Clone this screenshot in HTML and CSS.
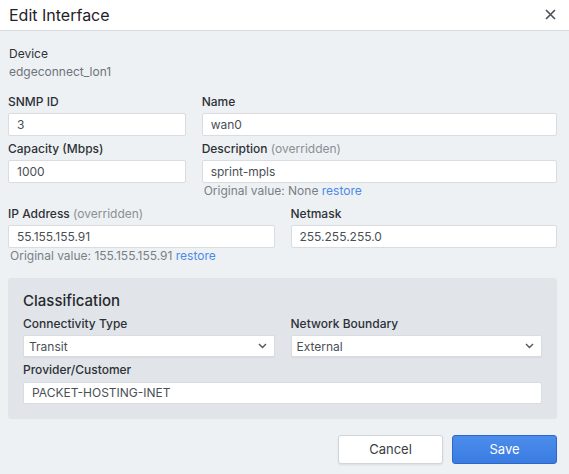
FILE: index.html
```html
<!DOCTYPE html>
<html lang="en">
<head>
    <meta charset="UTF-8">
    <title>Edit Interface</title>
    <link rel="stylesheet" href="styles.css">
</head>
<body>
    <div class="modal">
        <div class="header">
            <h2>Edit Interface</h2>
            <button class="close" aria-label="Close">
                <svg width="11" height="11" viewBox="0 0 11 11"><path d="M1 1L10 10M10 1L1 10" stroke="#4a4f55" stroke-width="1.6" fill="none"/></svg>
            </button>
        </div>

        <div class="content">
            <div class="device">
                <div class="label">Device</div>
                <div class="value">edgeconnect_lon1</div>
            </div>

            <div class="row thirds">
                <div class="field">
                    <label>SNMP ID</label>
                    <input type="text" value="3">
                </div>
                <div class="field">
                    <label>Name</label>
                    <input type="text" value="wan0">
                </div>
            </div>

            <div class="row thirds">
                <div class="field">
                    <label>Capacity (Mbps)</label>
                    <input type="text" value="1000">
                </div>
                <div class="field">
                    <label>Description <span class="muted">(overridden)</span></label>
                    <input type="text" value="sprint-mpls">
                    <div class="hint">Original value: None <a href="#">restore</a></div>
                </div>
            </div>

            <div class="row halves">
                <div class="field">
                    <label>IP Address <span class="muted">(overridden)</span></label>
                    <input type="text" value="55.155.155.91">
                    <div class="hint">Original value: 155.155.155.91 <a href="#">restore</a></div>
                </div>
                <div class="field">
                    <label>Netmask</label>
                    <input type="text" value="255.255.255.0">
                </div>
            </div>

            <div class="panel">
                <h3>Classification</h3>
                <div class="row halves">
                    <div class="field">
                        <label>Connectivity Type</label>
                        <div class="select">
                            <span>Transit</span>
                            <svg width="9" height="6" viewBox="0 0 9 6"><path d="M1 1L4.5 4.5L8 1" stroke="#555" stroke-width="1.4" fill="none"/></svg>
                        </div>
                    </div>
                    <div class="field">
                        <label>Network Boundary</label>
                        <div class="select">
                            <span>External</span>
                            <svg width="9" height="6" viewBox="0 0 9 6"><path d="M1 1L4.5 4.5L8 1" stroke="#555" stroke-width="1.4" fill="none"/></svg>
                        </div>
                    </div>
                </div>
                <div class="field">
                    <label>Provider/Customer</label>
                    <input type="text" value="PACKET-HOSTING-INET">
                </div>
            </div>

            <div class="actions">
                <button class="btn cancel">Cancel</button>
                <button class="btn save">Save</button>
            </div>
        </div>
    </div>
</body>
</html>
```

FILE: styles.css
```css
* {
    margin: 0;
    padding: 0;
    box-sizing: border-box;
}

html, body {
    width: 100%;
    height: 100%;
    font-family: Inter, "Noto Sans", Arial, sans-serif;
    background: #edf1f4;
    color: #2d3136;
}

.modal {
    width: 569px;
    min-height: 474px;
    background: #edf1f4;
}

.header {
    height: 31px;
    background: #ffffff;
    border-bottom: 1px solid #d6dbe0;
    display: flex;
    align-items: center;
    justify-content: space-between;
    padding: 0 13px 1px 9px;
}

.header h2 {
    font-size: 16px;
    font-weight: 400;
    color: #1f2226;
}

.close {
    border: none;
    background: none;
    display: flex;
    align-items: center;
}

.content {
    padding: 15px 12px 0 8px;
}

.device {
    padding-left: 1px;
    margin-bottom: 12px;
}

.label {
    font-size: 12px;
    line-height: 16px;
    color: #2d3136;
}

.device .value {
    font-size: 12px;
    line-height: 20px;
    color: #6e7378;
}

.row {
    display: grid;
    column-gap: 16px;
    margin-bottom: 5px;
}

.row.thirds {
    grid-template-columns: 1fr 2fr;
}

.row.halves {
    grid-template-columns: 1fr 1fr;
}

.field label {
    display: block;
    font-size: 12px;
    font-weight: 500;
    line-height: 16px;
    margin-bottom: 3px;
    color: #2d3136;
}

.muted {
    font-weight: 400;
    color: #8a8f95;
}

.field input,
.select {
    width: 100%;
    height: 23px;
    padding: 0 8px;
    border: 1px solid #d9dde2;
    border-radius: 2px;
    background: #ffffff;
    font-family: inherit;
    font-size: 12px;
    color: #4a4f55;
    outline: none;
}

.hint {
    font-size: 12px;
    line-height: 16px;
    color: #7a7f85;
    padding-left: 2px;
    margin-bottom: 2px;
}

.hint a {
    color: #4a8ae8;
    text-decoration: none;
}

.panel {
    margin-top: 12px;
    background: #e1e5ea;
    border-radius: 3px;
    padding: 13px 15px 15px;
}

.panel h3 {
    font-size: 15px;
    font-weight: 500;
    line-height: 20px;
    margin-bottom: 5px;
    color: #26292d;
}

.panel .row {
    margin-bottom: 5px;
}

.select {
    display: flex;
    align-items: center;
    justify-content: space-between;
    padding: 0 7px 0 5px;
    height: 22px;
    box-shadow: 0 1px 1px rgba(0, 0, 0, 0.05);
}

.panel input {
    height: 22px;
}

.actions {
    display: flex;
    justify-content: flex-end;
    gap: 9px;
    margin-top: 16px;
}

.btn {
    width: 105px;
    height: 29px;
    border-radius: 3px;
    font-family: inherit;
    font-size: 13px;
}

.cancel {
    background: #ffffff;
    border: 1px solid #d0d5da;
    color: #3a3e43;
    box-shadow: 0 1px 2px rgba(0, 0, 0, 0.08);
}

.save {
    background: linear-gradient(#4b8cec, #3b7ce2);
    border: 1px solid #2c68c8;
    color: #ffffff;
}
```
